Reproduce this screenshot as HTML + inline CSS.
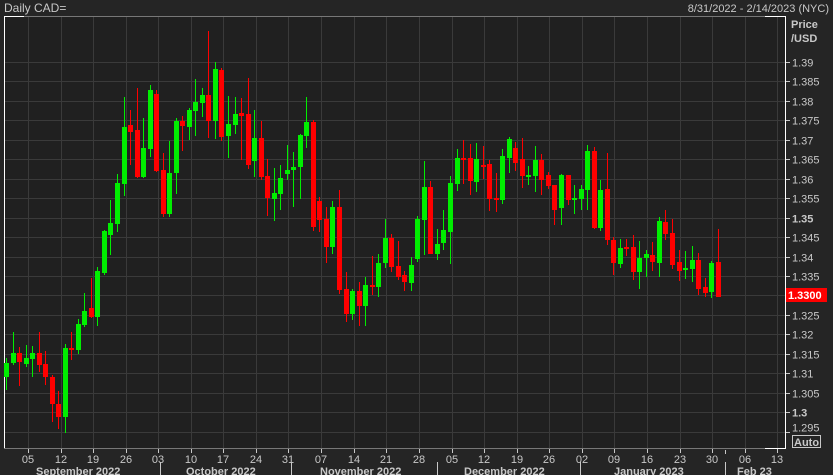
<!DOCTYPE html>
<html><head><meta charset="utf-8"><style>
html,body{margin:0;padding:0;background:#232323;width:833px;height:475px;overflow:hidden;font-family:"Liberation Sans","DejaVu Sans",sans-serif}
svg{display:block}
</style></head><body>
<svg id="s" width="833" height="475" xmlns="http://www.w3.org/2000/svg">
<rect x="0" y="0" width="833" height="475" fill="#252525"/>
<rect x="4" y="16" width="782" height="432" fill="#202020"/>
<g id="grid" stroke="#3a3a3a" stroke-width="1"></g>
<line x1="4" y1="16.5" x2="786" y2="16.5" stroke="#777"/>
<line x1="4" y1="448.5" x2="786" y2="448.5" stroke="#777"/>
<line x1="4.5" y1="16" x2="4.5" y2="448" stroke="#fff"/>
<line x1="4" y1="16.5" x2="24" y2="16.5" stroke="#fff"/>
<line x1="785.5" y1="16" x2="785.5" y2="449" stroke="#fff"/>
<line x1="765" y1="16.5" x2="786" y2="16.5" stroke="#fff"/>
<line x1="765" y1="448.5" x2="786" y2="448.5" stroke="#fff"/>
<g id="c"></g>
<g id="yl" font-size="11" fill="#c8c8c8"></g>
<g id="xl" font-size="11" fill="#c8c8c8" text-anchor="middle"></g>
<text x="4" y="12" font-size="12" fill="#c8c8c8">Daily CAD=</text>
<text x="829" y="12" font-size="11" fill="#c8c8c8" text-anchor="end">8/31/2022 - 2/14/2023 (NYC)</text>
<text x="791" y="28" font-size="11" font-weight="bold" fill="#c8c8c8">Price</text>
<text x="791" y="42" font-size="11" font-weight="bold" fill="#c8c8c8">/USD</text>
<rect x="786" y="288" width="41" height="14" fill="#ff0000"/>
<text x="788" y="299" font-size="11" font-weight="bold" fill="#fff">1.3300</text>
<rect x="792.5" y="435.5" width="28" height="12" fill="none" stroke="#c8c8c8"/>
<text x="794" y="446" font-size="11" font-weight="bold" fill="#c8c8c8">Auto</text>
<g font-size="11" font-weight="bold" fill="#c8c8c8">
<text x="36" y="475">September 2022</text>
<text x="186" y="475">October 2022</text>
<text x="320" y="475">November 2022</text>
<text x="464" y="475">December 2022</text>
<text x="614" y="475">January 2023</text>
<text x="737" y="475">Feb 23</text>
</g>
<g stroke="#c8c8c8"><line x1="160.5" y1="462" x2="160.5" y2="475"/><line x1="291.5" y1="462" x2="291.5" y2="475"/><line x1="437.5" y1="462" x2="437.5" y2="475"/><line x1="580.5" y1="462" x2="580.5" y2="475"/><line x1="725.5" y1="462" x2="725.5" y2="475"/><line x1="725.5" y1="450" x2="725.5" y2="454"/></g>
</svg>
<script>
var NS="http://www.w3.org/2000/svg";
function el(p,t,a,txt){var e=document.createElementNS(NS,t);for(var k in a)e.setAttribute(k,a[k]);if(txt)e.textContent=txt;document.getElementById(p).appendChild(e);}
var labs=["1.39","1.385","1.38","1.375","1.37","1.365","1.36","1.355","1.35","1.345","1.34","1.335","1.33","1.325","1.32","1.315","1.31","1.305","1.3","1.295"];
for(var i=0;i<labs.length;i++){var y=Math.round(62+i*19.45)+0.5;
el("grid","line",{x1:4,y1:y,x2:786,y2:y});
el("grid","line",{x1:786,y1:y,x2:790,y2:y,stroke:"#c8c8c8"});
if(labs[i]!="1.33"){var ty=y+4;if(labs[i]=="1.295")ty=y-1;
var a={x:792,y:ty};if(labs[i]=="1.35"||labs[i]=="1.3")a["font-weight"]="bold";el("yl","text",a,labs[i]);}}
var xs=[["05",28],["12",61],["19",93],["26",126],["03",158],["10",191],["17",223],["24",256],["31",288],["07",321],["14",354],["21",386],["28",419],["05",452],["12",484],["19",517],["26",549],["02",582],["09",614],["16",647],["23",680],["30",712],["06",745],["13",777]];
xs.forEach(function(d){var x=d[1]+0.5;el("grid","line",{x1:x,y1:17,x2:x,y2:448});el("grid","line",{x1:x,y1:449,x2:x,y2:453,stroke:"#c8c8c8"});el("xl","text",{x:d[1],y:463},d[0]);});
var C=[[6,363,377,358,390,'g'],[13,353,363,332,365,'g'],[19,353,362,347,386,'r'],[26,358,364,345,367,'g'],[32,353,359,346,377,'g'],[39,353,365,332,372,'r'],[45,364,377,351,385,'r'],[52,377,404,375,422,'r'],[58,404,417,391,429,'r'],[65,348,417,344,433,'g'],[71,348,350,332,360,'r'],[78,324,350,319,354,'g'],[84,311,325,293,327,'g'],[91,308,317,278,318,'r'],[97,271,317,267,326,'g'],[104,231,273,230,275,'g'],[110,223,235,200,255,'g'],[117,183,224,174,232,'g'],[124,127,184,97,196,'g'],[130,125,132,110,165,'r'],[137,130,177,88,178,'r'],[143,148,177,118,178,'g'],[150,90,149,85,157,'g'],[156,94,171,90,172,'r'],[163,170,214,153,217,'r'],[169,173,214,141,217,'g'],[176,121,173,118,194,'g'],[182,121,126,116,151,'r'],[189,110,127,108,140,'g'],[195,102,111,79,136,'g'],
[202,95,103,88,117,'g'],[208,95,121,31,138,'r'],[215,69,121,62,139,'g'],[221,70,137,68,141,'r'],[228,124,136,96,158,'g'],[235,114,125,97,134,'g'],[241,113,116,98,160,'r'],[248,114,165,78,169,'r'],[254,138,161,110,177,'g'],[261,138,177,121,180,'r'],[267,176,198,159,216,'r'],[274,193,199,168,221,'g'],[280,178,194,165,210,'g'],[287,170,174,145,180,'g'],[293,167,170,152,207,'g'],[300,135,167,134,199,'g'],[306,122,136,97,148,'g'],[313,122,227,120,231,'r'],[319,201,220,197,232,'r'],[326,219,247,207,263,'r'],[332,207,247,201,254,'g'],[339,207,290,190,294,'r'],[346,289,314,272,322,'r'],[352,291,314,289,320,'g'],[359,291,306,282,326,'r'],[365,285,306,277,326,'g'],[372,285,286,256,295,'r'],[378,263,287,254,297,'g'],[385,238,263,219,268,'g'],[391,238,267,234,272,'r'],
[398,266,277,241,280,'r'],[404,275,282,271,291,'r'],[411,265,283,257,291,'g'],[417,219,259,216,262,'g'],[424,187,220,161,255,'g'],[430,187,254,181,254,'r'],[437,244,254,229,260,'g'],[443,230,243,210,250,'g'],[450,183,232,176,264,'g'],[457,158,184,149,191,'g'],[463,158,159,140,184,'r'],[470,158,181,144,195,'r'],[476,159,182,143,192,'g'],[483,165,166,146,179,'r'],[489,164,199,160,211,'r'],[496,198,200,173,212,'r'],[502,156,200,149,204,'g'],[509,139,158,137,173,'g'],[515,148,163,142,171,'r'],[522,159,176,138,188,'r'],[528,175,177,166,185,'g'],[535,160,176,146,192,'g'],[541,160,180,154,195,'r'],[548,175,186,172,189,'r'],[554,185,210,185,225,'r'],[561,175,208,174,225,'g'],[568,175,200,175,205,'r'],[574,198,200,185,214,'g'],[581,189,199,185,210,'g'],
[587,151,190,145,210,'g'],[594,151,228,147,229,'r'],[600,190,228,180,231,'g'],[607,189,240,153,245,'r'],[613,240,263,237,275,'r'],[620,248,264,239,268,'g'],[626,247,249,239,256,'r'],[633,247,272,235,280,'r'],[639,258,272,241,289,'g'],[646,254,258,250,277,'g'],[652,255,262,242,271,'r'],[659,221,263,217,277,'g'],[665,222,234,210,240,'r'],[672,233,265,219,269,'r'],[679,262,271,250,281,'r'],[685,268,269,251,279,'g'],[692,260,269,246,282,'g'],[698,260,289,253,295,'r'],[705,287,293,278,297,'r'],[711,263,292,261,298,'g'],[718,262,297,229,297,'r']];
C.forEach(function(c){var col=c[5]=='g'?'#00ee00':'#ff0000';
el("c","rect",{x:c[0],y:c[3],width:1,height:Math.max(1,c[4]-c[3]),fill:col});
el("c","rect",{x:c[0]-2,y:c[1],width:5,height:Math.max(2,c[2]-c[1]),fill:col});});
</script>
</body></html>
